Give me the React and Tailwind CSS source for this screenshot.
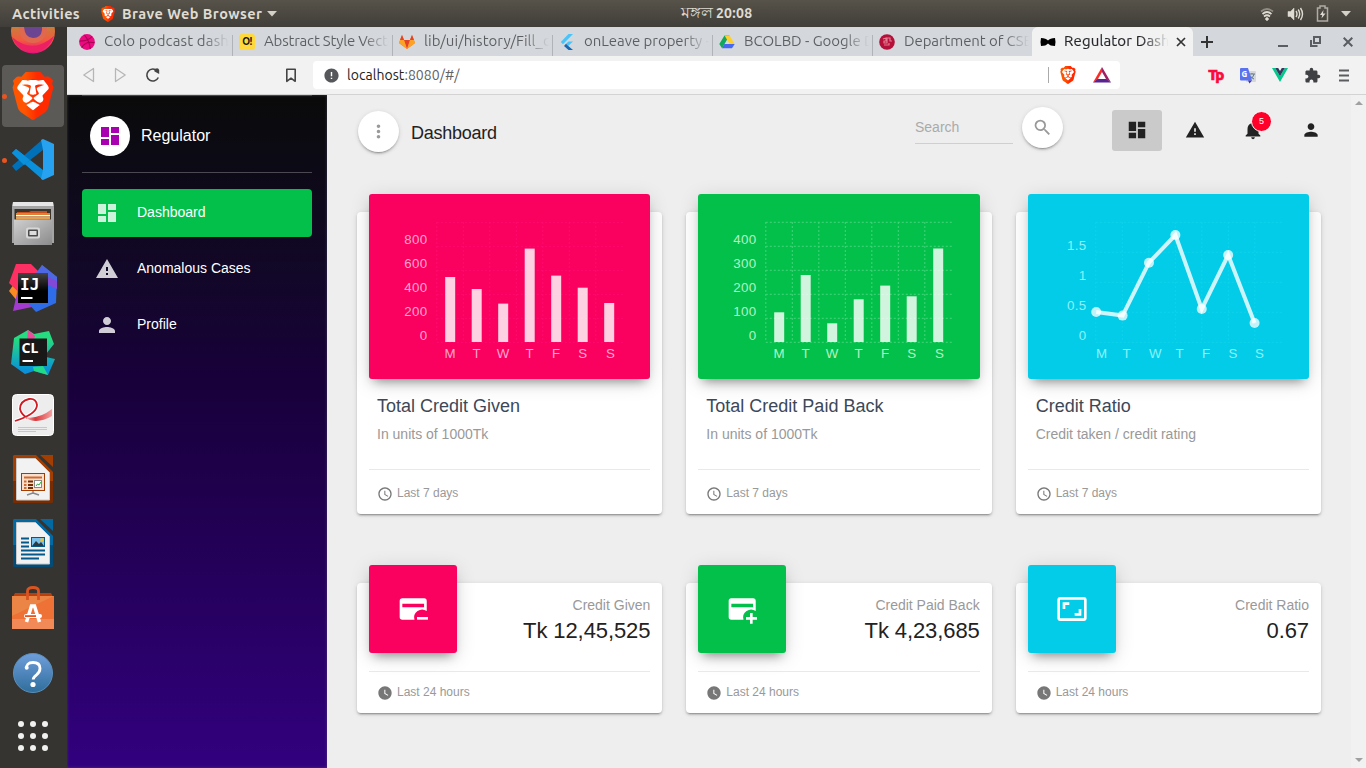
import React from 'react';
import { MdDashboard, MdWarning, MdPerson, MdNotifications, MdSearch, MdMoreVert, MdAccessTime, MdWatchLater, MdAspectRatio, MdExtension, MdError } from 'react-icons/md';
import { SiBrave } from 'react-icons/si';

const UI = "font-['Ubuntu','Noto_Sans',sans-serif]";

function Brave({ size }) {
  return (
    <svg width={size} height={size} viewBox="0 0 24 24" className="shrink-0">
      <defs>
        <linearGradient id="brave" x1="0" x2="1" y1="0" y2="0">
          <stop offset="0.3" stopColor="#ff5500" />
          <stop offset="0.6" stopColor="#ff2a00" />
        </linearGradient>
      </defs>
      <path d="M5 4h14l1.500 4-3 11-5.500 3.500L6.500 19l-3-11z" fill="#fff" />
      <SiBrave size={24} fill="url(#brave)" color="url(#brave)" />
    </svg>
  );
}

function Caret() {
  return <svg width="10" height="6" viewBox="0 0 10 6" className="shrink-0"><path d="M0 0h10L5 5.500z" fill="#d5d1c8" /></svg>;
}

function TopBar() {
  return (
    <header className={`grid h-[27px] shrink-0 grid-cols-3 items-center bg-linear-to-b from-[#57534a] to-[#403e39] text-[14.500px] font-bold text-[#dfdbd2] ${UI}`}>
      <div className="flex items-center pl-3 pt-px">
        <span className="w-[88px] tracking-[0.35px]">Activities</span>
        <Brave size={16} />
        <span className="ml-[6px] w-[145px] whitespace-nowrap tracking-[0.45px]">Brave Web Browser</span>
        <Caret />
      </div>
      <div className="pb-[3px] pl-[67px] text-center text-[14px] leading-5">
        <span className="text-[16px] font-normal leading-5">মঙ্গল</span> <span className="tracking-[0.3px]">20:08</span>
      </div>
      <div className="flex items-center justify-end gap-[12px] pr-[15px]">
        <svg width="16" height="16" viewBox="0 0 16 16" fill="none" stroke="#dfdbd2" strokeWidth="1.700">
          <path d="M2 5.500Q8 .5 14 5.500" opacity=".45" /><path d="M3.500 8Q8 4 12.500 8M5 10.500Q8 8 11 10.500" /><circle cx="8" cy="13" r="1.300" fill="#dfdbd2" strokeWidth="1" />
        </svg>
        <svg width="17" height="16" viewBox="0 0 17 16" fill="none" stroke="#dfdbd2" strokeWidth="1.400">
          <path d="M1 5.500h2.500L7 2v12l-3.500-3.500H1z" fill="#dfdbd2" strokeWidth=".5" /><path d="M9 5q2 3 0 6M11.200 3.500q3 4.500 0 9M13.500 2q4 6 0 12" />
        </svg>
        <svg width="13" height="17" viewBox="0 0 13 17" fill="none" stroke="#b0aca4" strokeWidth="1.500">
          <path d="M1.500 3h2.500V1h5v2h2.500v13h-10z" /><path d="M7.500 5L4 10h2.200L5.500 13.500 9.500 8.500H7z" fill="#dfdbd2" stroke="none" />
        </svg>
        <Caret />
      </div>
    </header>
  );
}

function Firefox() {
  return (
    <svg width="46" height="46" viewBox="0 0 46 46">
      <defs>
        <linearGradient id="ff" x1="0" x2="0" y1="0" y2="1"><stop offset=".3" stopColor="#b98a3a" /><stop offset=".7" stopColor="#f4593f" /><stop offset="1" stopColor="#e5117e" /></linearGradient>
      </defs>
      <circle cx="23" cy="22.500" r="22" fill="url(#ff)" />
      <path d="M2 28Q23 46 44 27a22 22 0 01-42 1z" fill="#ee2064" />
      <circle cx="23" cy="20" r="14" fill="#e0684f" />
      <path d="M14 18q3-3 18-5v8q-1 8-9 8t-9-11z" fill="#6b4591" />
    </svg>
  );
}

function VsCode() {
  return (
    <svg width="44" height="44" viewBox="0 0 44 44">
      <path d="M1 15l4-4 27 21v10L1 15z" fill="#0b91dc" />
      <path d="M1 28l4 5L32 12V1L1 28z" fill="#0070b8" />
      <path d="M1 15l4-4 14 11-6 5z" fill="#0b91dc" />
      <path d="M32 1l11 5v31l-11 5-2-1 2-9V12l-2-10z" fill="#27a2f0" />
    </svg>
  );
}

function Files() {
  return (
    <svg width="44" height="44" viewBox="0 0 44 44">
      <defs><linearGradient id="fi" x1="0" x2="1" y1="0" y2="1"><stop offset="0" stopColor="#cfcfcf" /><stop offset="1" stopColor="#8b8b8b" /></linearGradient></defs>
      <path d="M2 0h40l1 5v36H1V5z" fill="#a4a4a4" /><path d="M2 0h40l.5 4h-41z" fill="#e6e6e6" />
      <rect x="3.500" y="7" width="36.500" height="11" fill="#38342d" />
      <path d="M6 10h12l2-1h16v3H6z" fill="#c8501c" /><rect x="5" y="11" width="34" height="2" fill="#e08030" /><rect x="5" y="13" width="34" height="1.500" fill="#fff" /><rect x="5" y="14.500" width="34" height="3" fill="#e9a04c" />
      <path d="M3 17.500h38V43H3z" fill="url(#fi)" />
      <rect x="15" y="25.500" width="14" height="11" rx="2" fill="#d7d7d7" /><rect x="17" y="27.500" width="10" height="7" rx="1" fill="#4b4b4b" /><rect x="18.500" y="29" width="7" height="4" fill="#ddd" />
    </svg>
  );
}

function IntelliJ() {
  return (
    <svg width="50" height="50" viewBox="0 0 50 50">
      <defs><linearGradient id="blk" x1="0" x2="0" y1="0" y2="1"><stop offset="0" stopColor="#444" /><stop offset=".6" stopColor="#000" /></linearGradient></defs>
      <path d="M1 28l5-7 7 3-3 15z" fill="#f98b22" /><path d="M5 48l5-22 14 18z" fill="#a33bd0" />
      <path d="M8 1h15l10 10-10 30L1 20z" fill="#fc3062" /><path d="M34 2l15 12-1 26-20 9-9-10z" fill="#2f6ce8" /><path d="M34 2l15 12v9L28 10z" fill="#4e68e4" /><path d="M40 14l9 4v8l-9-4z" fill="#8248d6" />
      <rect x="10" y="10" width="30" height="30" fill="url(#blk)" />
      <text x="12" y="26.500" fontSize="16" fontWeight="700" fill="#fff" fontFamily="DejaVu Sans Mono">IJ</text><rect x="13" y="34" width="11.500" height="2" fill="#fff" />
    </svg>
  );
}

function CLion() {
  return (
    <svg width="46" height="46" viewBox="0 0 46 46">
      <defs><linearGradient id="cl" x1="0" x2="0" y1="0" y2="1"><stop offset=".2" stopColor="#25dc80" /><stop offset=".9" stopColor="#0a91d8" /></linearGradient></defs>
      <path d="M4 9L18 1l6 4 15-3 5 13-8 10v3l9 2-7 16-14-4-9 3-14-10z" fill="url(#cl)" /><path d="M18 1l7 6-2 9-6-3z" fill="#ea4c9b" /><path d="M23 38l10-1 5 9-14-4z" fill="#22d98a" />
      <rect x="9.500" y="9.500" width="27.500" height="27.500" fill="#181818" />
      <text x="11.500" y="24" fontSize="14" fontWeight="700" fill="#fff" fontFamily="Noto Sans">CL</text><rect x="12.500" y="31" width="10.500" height="2" fill="#fff" />
    </svg>
  );
}

function Evince() {
  return (
    <svg width="42" height="42" viewBox="0 0 42 42" className="-mt-[2px]">
      <defs><linearGradient id="ev" x1="0" x2="1" y1="0" y2="0"><stop offset=".1" stopColor="#f3b4b4" /><stop offset=".4" stopColor="#d8383c" /><stop offset="1" stopColor="#f4a0a0" /></linearGradient></defs>
      <rect x=".5" y=".5" width="41" height="41" rx="4" fill="#ededed" stroke="#fff" />
      <path d="M3 27Q25 20 25 11 24 4 17 5 8 7 8 15q1 5 7 9" fill="none" stroke="#fff" strokeWidth="4" />
      <path d="M3 27Q25 20 25 11 24 4 17 5 8 7 8 15q1 5 7 9" fill="none" stroke="#cf1c22" strokeWidth="1.800" />
      <path d="M12 23q14 3 28-8v7q-12 7-22 4z" fill="url(#ev)" />
      <path d="M6 33.500h29M6 35.500h29M6 37.500h18" stroke="#c7c7c7" />
    </svg>
  );
}

function Office({ main, dark, children }) {
  return (
    <svg width="42" height="48" viewBox="0 0 42 48" className="-mt-[2px]">
      <path d="M2 0h22l17 17v29a2 2 0 01-2 2H3a2 2 0 01-2-2V1z" fill={main} />
      <path d="M1 26h40v20a2 2 0 01-2 2H3a2 2 0 01-2-2z" fill={dark} opacity=".6" />
      <path d="M4.500 3.500h19l14 14v27.500h-33z" fill="#f2f2f2" stroke="#c9c9c9" strokeWidth="1" />
      <path d="M28 0h13v12z" fill={main} />
      {children}
    </svg>
  );
}

function Impress() {
  return (
    <Office main="#a33e03" dark="#5d2200">
      <rect x="9.500" y="18.500" width="23" height="17" fill="#f8dfcf" stroke="#a33e03" /><path d="M12 22.500h18" stroke="#d36a2c" strokeWidth="2" />
      <path d="M12 26.500h2.500M12 30h2.500M12 33h2.500" stroke="#d36a2c" strokeWidth="2" /><path d="M16 26.500h5M16 30h5M16 33h5" stroke="#7a2c00" strokeWidth="2" />
      <rect x="22.500" y="25.500" width="7" height="7" fill="#fff" stroke="#888" /><path d="M24 31l1.500-2 1.500 1 2-3" fill="none" stroke="#2eaa3c" />
      <path d="M21 36v2l-6 2M21 38l6 2" fill="none" stroke="#888" strokeWidth="1.500" />
    </Office>
  );
}

function Writer() {
  return (
    <Office main="#0369a3" dark="#04395c">
      <path d="M9 19.500h8M9 23.500h8M9 27.500h8M9 31.500h24M9 35.500h24M9 39.500h18" stroke="#04588a" strokeWidth="2" />
      <rect x="19.500" y="18.500" width="13" height="9" fill="#79c0ec" stroke="#04588a" /><path d="M20 27l4-5 3 3 2-2 3 4z" fill="#2d3a40" /><circle cx="30" cy="21" r="1.800" fill="#f0c030" />
    </Office>
  );
}

function Software() {
  return (
    <svg width="42" height="44" viewBox="0 0 42 44">
      <path d="M3 7h36l2 4H1z" fill="#b8400f" /><rect y="10" width="42" height="33" fill="#ee7136" /><path d="M0 10h42L0 30z" fill="#e89a55" opacity=".5" /><rect y="33" width="42" height="10" fill="#f18a57" />
      <path d="M15.500 14V5q0-3.500 5.500-3.500T26.500 5v9" fill="none" stroke="#d95420" strokeWidth="2.800" />
      <path d="M14.500 36l5-16h3l5 16" fill="none" stroke="#fff" strokeWidth="3.500" /><rect x="12" y="28" width="18" height="4" rx="2" fill="#fff" /><rect x="13" y="29.200" width="11" height="1.800" fill="#e95420" />
    </svg>
  );
}

function Help() {
  return (
    <svg width="40" height="40" viewBox="0 0 40 40" className="mt-[2px]">
      <defs><linearGradient id="hp" x1="0" x2="0" y1="0" y2="1"><stop offset="0" stopColor="#6f9edb" /><stop offset="1" stopColor="#2f6e9c" /></linearGradient></defs>
      <circle cx="20" cy="20" r="19.500" fill="url(#hp)" stroke="#5b8fbb" />
      <path d="M13.500 16q-.5-6.500 6.500-6.500t7 6q0 3.500-3.500 6.300-3.300 2.500-3.300 4.700" fill="none" stroke="#fff" strokeWidth="2.800" />
      <circle cx="13.700" cy="14.800" r="2" fill="#fff" /><circle cx="20" cy="31.500" r="2.600" fill="#fff" />
    </svg>
  );
}

function Apps() {
  return (
    <svg width="32" height="32" viewBox="0 0 32 32" fill="#f1f1ef">
      {[4, 16, 28].map((y) => [4, 16, 28].map((x) => <circle key={`${x}-${y}`} cx={x} cy={y} r="3" />))}
    </svg>
  );
}

function Slot({ running, children }) {
  return (
    <div className="relative flex h-16 shrink-0 items-center justify-center">
      {running && <span className="absolute left-[2px] h-[5px] w-[5px] rounded-full bg-[#e95420]" />}
      {children}
    </div>
  );
}

function Dock() {
  return (
    <aside className="flex w-[67px] shrink-0 flex-col justify-end overflow-hidden bg-[#353430] pr-px">
      <Slot><Firefox /></Slot>
      <div className="relative flex h-16 shrink-0 items-center justify-center">
        <div className="flex h-[62px] w-[62px] items-center justify-center rounded bg-[#5b5a57]"><Brave size={48} /></div>
        <span className="absolute left-[2px] h-[5px] w-[5px] rounded-full bg-[#e95420]" />
      </div>
      <Slot running><VsCode /></Slot>
      <Slot><Files /></Slot>
      <Slot><IntelliJ /></Slot>
      <Slot><CLion /></Slot>
      <Slot><Evince /></Slot>
      <Slot><Impress /></Slot>
      <Slot><Writer /></Slot>
      <Slot><Software /></Slot>
      <Slot><Help /></Slot>
      <Slot><Apps /></Slot>
    </aside>
  );
}

const tabs = [
  ['Colo podcast dashboard', 'tracking-[0.15px]', (
    <svg key="d" width="16" height="16" viewBox="0 0 16 16"><circle cx="8" cy="8" r="7.900" fill="#ec0a80" /><path d="M5.500 1q5 6 5.800 14M.5 7q8 .5 12.500-4.500M2.800 13.500Q7 6.500 15.500 8.800" fill="none" stroke="#a3004f" strokeWidth="1.100" /></svg>
  )],
  ['Abstract Style Vectors', 'tracking-[-0.2px]', <span key="o" className="flex h-4 w-4 items-center justify-center rounded-[3px] bg-[#ffd83b] text-[10px] font-bold leading-4 tracking-tighter text-[#111]">O!</span>],
  ['lib/ui/history/Fill_color', 'tracking-[0.050px]', (
    <svg key="g" width="16" height="16" viewBox="0 0 16 16"><path d="M0 9l3-8 2 5h6l2-5 3 8-8 6z" fill="#fc6d26" /><path d="M5 6h6l-3 9z" fill="#e24329" /><path d="M0 9l1-3h4l3 9z" fill="#fca326" /><path d="M16 9l-1-3h-4L8 15z" fill="#fca326" /><path d="M1 6l2-5 2 5zM11 6l2-5 2 5z" fill="#e24329" /></svg>
  )],
  ['onLeave property - flutter', 'tracking-[-0.05px]', (
    <svg key="f" width="16" height="16" viewBox="0 0 16 16"><path d="M9.500 0H14L4 10.300 1.800 8z" fill="#47c5fb" /><path d="M9.500 7.500H14L9.300 12 7 9.800z" fill="#47c5fb" /><path d="M7 9.800l2.300 2.200L14 16H9.500L5 12z" fill="#1769b5" /></svg>
  )],
  ['BCOLBD - Google Drive', 'tracking-[-0.05px]', (
    <svg key="v" width="16" height="16" viewBox="0 0 16 16"><path d="M5.500 1.500h5L5.500 10 3 14.300.3 10z" fill="#11a85b" /><path d="M5.500 1.500h5L15.700 10h-5z" fill="#ffcf2e" /><path d="M5.400 10h10.300L13 14.300H3z" fill="#4667f0" /></svg>
  )],
  ['Department of CSE', 'tracking-[-0.1px]', (
    <svg key="c" width="16" height="16" viewBox="0 0 16 16"><circle cx="8" cy="8" r="7.800" fill="#b5103a" /><path d="M4 5l3-1v3H5v2h3V4h3v3h2M5 11h5v-2" fill="none" stroke="#e57a90" strokeWidth="1.200" /></svg>
  )],
];

function TabStrip() {
  return (
    <div className={`flex h-[29px] shrink-0 bg-[#d4d8dc] text-[15px] text-[#6c6e71] ${UI}`}>
      <div className="flex w-[965px]">
        {tabs.map(([label, track, icon], i) => (
          <div key={label} className={`flex h-full shrink-0 items-center ${i === 0 ? 'w-[166px] pl-3' : 'w-40 pl-[6px]'}`}>
            <span className="flex w-[25px] shrink-0">{icon}</span>
            <span className={`min-w-0 flex-1 overflow-hidden whitespace-nowrap bg-linear-to-r from-[#5d5e61] from-80% to-transparent bg-clip-text text-transparent ${track}`}>{label}</span>
            <span className={`ml-[3px] h-[21px] w-px self-end ${i < 5 ? 'bg-[#b0b4b8]' : ''}`} />
          </div>
        ))}
      </div>
      <div className="flex w-[161px] shrink-0 items-center rounded-t-md bg-[#f2f2f2] pl-2 pr-[7px]">
        <svg width="16" height="16" viewBox="0 0 16 16" className="mr-2 shrink-0"><path d="M1 4q5 0 7 2.500Q10 4 15 4l.5 4-.5 4q-5 0-7-2.500Q6 12 1 12L.5 8z" fill="#000" /></svg>
        <span className="min-w-0 flex-1 overflow-hidden whitespace-nowrap bg-linear-to-r from-[#25262a] from-75% to-transparent bg-clip-text tracking-[0.15px] text-transparent [-webkit-text-stroke:0.15px_#35363a60]">Regulator Dashboard</span>
        <svg width="10" height="10" viewBox="0 0 10 10" className="ml-2 shrink-0"><path d="M1 1l8 8M9 1L1 9" stroke="#333" strokeWidth="1.700" /></svg>
      </div>
      <div className="flex flex-1 items-center justify-between pl-2 pr-[13px]">
        <svg width="12" height="12" viewBox="0 0 12 12"><path d="M6 0v12M0 6h12" stroke="#333" strokeWidth="2" /></svg>
        <div className="flex items-center gap-[22px]">
          <svg width="10" height="10" viewBox="0 0 10 10"><path d="M0 9h10" stroke="#5a5d62" strokeWidth="2" /></svg>
          <svg width="11" height="11" viewBox="0 0 11 11" fill="none" stroke="#5a5d62" strokeWidth="2"><path d="M4 1h6v6H4zM1 4v6h6.500" /></svg>
          <svg width="10" height="10" viewBox="0 0 10 10"><path d="M.7.7l8.600 8.600M9.300.7L.7 9.300" stroke="#5a5d62" strokeWidth="2" /></svg>
        </div>
      </div>
    </div>
  );
}

function Toolbar() {
  return (
    <div className={`flex h-[39px] shrink-0 items-center border-b border-[#d3d3d3] bg-[#f2f2f2] ${UI}`}>
      <div className="flex w-[234px] items-center gap-[19px] pl-4">
        <svg width="12" height="16" viewBox="0 0 12 16"><path d="M10.500 1.500v13L.8 8z" fill="none" stroke="#b6b6b6" strokeWidth="1.300" strokeLinejoin="round" /></svg>
        <svg width="12" height="16" viewBox="0 0 12 16"><path d="M1.500 1.500v13L11.200 8z" fill="none" stroke="#b6b6b6" strokeWidth="1.300" strokeLinejoin="round" /></svg>
        <svg width="16" height="16" viewBox="0 0 16 16"><path d="M13.300 10.500a6 6 0 11-1-6.500" fill="none" stroke="#444" strokeWidth="1.600" /><path d="M9.500 4.500a2.200 2.200 0 014.700-1.500V7z" fill="#444" /></svg>
      </div>
      <svg width="12" height="15" viewBox="0 0 12 15" className="-ml-[16px] mr-[16px]"><path d="M1.800 1.300h8.400v12L6 10.200l-4.200 3.100z" fill="none" stroke="#444" strokeWidth="1.600" strokeLinejoin="round" /></svg>
      <div className="flex h-7 w-[807px] items-center rounded bg-white pl-[10px] pr-[9px]">
        <MdError size={17} color="#55575a" />
        <div className="ml-[7px] flex-1 text-[14px] tracking-[0.05px] text-[#222]">localhost<span className="text-[#606265]">:8080/#/</span></div>
        <span className="mr-[10px] h-4 w-px bg-[#aaa]" />
        <Brave size={18} />
        <svg width="18" height="16" viewBox="0 0 18 16" className="ml-[16px]"><path d="M9 0L0 15.500 5 12l4-7z" fill="#ff2a24" /><path d="M9 0l9 15.500-5-3.500-4-7z" fill="#9e1f63" /><path d="M0 15.500h18L13.500 12h-9z" fill="#5b2391" /></svg>
      </div>
      <div className="flex flex-1 items-center justify-end gap-[16px] pr-[17px]">
        <span className="mr-px text-[15px] font-extrabold leading-4 tracking-[-1.300px] text-[#fb0b3c] [-webkit-text-stroke:0.7px_#fb0b3c]">Tp</span>
        <svg width="16" height="17" viewBox="0 0 16 17"><rect x="6" y="4" width="10" height="11" rx="1" fill="#d5d7db" /><path d="M9 7h6M12 6v1M10 12q4-2 4-5M10 8.500q2 3 4 3.500" stroke="#607d8b" fill="none" /><path d="M1 1h7l4 12.500H1a1 1 0 01-1-1V2a1 1 0 011-1z" fill="#5b72ef" /><path d="M8 13.500h4L9.500 16.500z" fill="#3a33c0" /><text x="1.500" y="10" fontSize="8" fontWeight="700" fill="#fff" fontFamily="Noto Sans">G</text></svg>
        <svg width="16" height="14" viewBox="0 0 16 14"><path d="M0 0h3.200L8 8.300 12.800 0H16L8 14z" fill="#00c98b" /><path d="M3.200 0h3L8 3l1.800-3h3L8 8.300z" fill="#35395e" /></svg>
        <MdExtension size={17} color="#3f4144" />
        <svg width="10" height="13" viewBox="0 0 10 13" className="ml-[2px]"><path d="M0 1.500h10M0 6.500h10M0 11.500h10" stroke="#5a5c5f" strokeWidth="1.800" /></svg>
      </div>
    </div>
  );
}

function SideItem({ icon: Icon, label, active }) {
  return (
    <a className={`flex h-12 items-center rounded pl-[13px] text-[14px] text-white ${active ? 'bg-[#03c04a]' : ''}`}>
      <Icon size={24} className="mr-[18px] text-white/80" />
      <span className="-mt-[2px]">{label}</span>
    </a>
  );
}

function Sidebar() {
  return (
    <nav className="flex w-[260px] shrink-0 flex-col bg-linear-to-b from-[#0a0a0a] via-[#18003a] via-42% to-[#32007f] px-[15px] shadow-[inset_0_0_3px_#6a6a8880]">
      <div className="flex h-[78px] items-center border-y border-b-white/25 border-t-white/20 pl-2 pt-1">
        <div className="flex h-10 w-10 items-center justify-center rounded-full bg-white"><MdDashboard size={24} color="#a800b0" /></div>
        <span className="ml-[11px] text-[16px] text-white">Regulator</span>
      </div>
      <div className="mt-4 flex flex-col gap-2">
        <SideItem icon={MdDashboard} label="Dashboard" active />
        <SideItem icon={MdWarning} label="Anomalous Cases" />
        <SideItem icon={MdPerson} label="Profile" />
      </div>
    </nav>
  );
}

function RoundButton({ children }) {
  return <button className="flex h-[41px] w-[41px] items-center justify-center rounded-full bg-white text-[#999] shadow-[0_2px_2px_0_rgba(0,0,0,0.14),0_3px_1px_-2px_rgba(0,0,0,0.2),0_1px_5px_0_rgba(0,0,0,0.12)]">{children}</button>;
}

function Header() {
  return (
    <div className="flex h-[75px] pl-[31px] pr-[15px] text-[#222]">
      <div className="flex items-start pt-4">
        <RoundButton><MdMoreVert size={21} /></RoundButton>
        <h1 className="ml-3 mt-[10px] text-[18px] leading-6 tracking-[-0.25px]">Dashboard</h1>
      </div>
      <div className="ml-auto flex items-start pt-3">
        <div className="mr-[9px] h-[37px] w-[98px] border-b border-[#cfcfcf] pt-[10px] text-[14px] leading-5 text-[#aaa]">Search</div>
        <RoundButton><MdSearch size={21} /></RoundButton>
        <div className="ml-[49px] mt-[3px] flex gap-2">
          <span className="flex h-[41px] w-[50px] items-center justify-center rounded-[3px] bg-[#cacaca] pb-[2px]"><MdDashboard size={22} /></span>
          <span className="flex h-[41px] w-[50px] items-center justify-center pb-[2px]"><MdWarning size={20} /></span>
          <span className="relative flex h-[41px] w-[50px] items-center justify-center pb-[2px]">
            <MdNotifications size={22} />
            <span className="absolute left-[23px] top-[1px] flex h-[21px] w-[21px] items-center justify-center rounded-full border-[1.500px] border-white bg-[#ff0029] text-[9px] text-white">5</span>
          </span>
          <span className="flex h-[41px] w-[50px] items-center justify-center pb-[2px]"><MdPerson size={20} /></span>
        </div>
      </div>
    </div>
  );
}

const days = ['M', 'T', 'W', 'T', 'F', 'S', 'S'];
const X0 = 67.8;
const STEP = 26.5;
const BASE = 148;

function Chart({ labels, gap, ink, grid, bars, points }) {
  const rows = [];
  for (let y = 28; y <= BASE; y += gap) rows.push(y);
  return (
    <svg width="281" height="185" className="block">
      <g stroke={grid} strokeDasharray="2 2">
        {rows.map((y) => <path key={y} d={`M${X0} ${y + 0.3}H254`} />)}
        {days.map((_, i) => <path key={i} d={`M${X0 + i * STEP} 28V${BASE}`} />)}
      </g>
      <g fill={ink} fontSize="13.300" letterSpacing="0.35" fontFamily="Liberation Sans">
        {labels.map((t, i) => <text key={t} x="58.500" y={146 - i * gap} textAnchor="end">{t}</text>)}
        {days.map((t, i) => (bars
          ? <text key={i} x={X0 + 13.500 + i * STEP + (i === 6 ? 1.3 : 0)} y="164" textAnchor="middle">{t}</text>
          : <text key={i} x={X0 + 0.3 + i * STEP} y="164">{t}</text>))}
      </g>
      {bars && bars.map((top, i) => <rect key={i} x={X0 + 8.400 + i * STEP} y={top} width="10" height={BASE - top} fill="#fff" fillOpacity=".82" />)}
      {points && (
        <g>
          <polyline points={points.map((y, i) => `${X0 + 0.4 + i * STEP * 0.996},${y}`).join(' ')} fill="none" stroke="#fff" strokeOpacity=".8" strokeWidth="4" />
          {points.map((y, i) => <circle key={i} cx={X0 + 0.4 + i * STEP * 0.996} cy={y} r="5" fill="#fff" fillOpacity=".75" />)}
        </g>
      )}
    </svg>
  );
}

const CARD = 'flex flex-col rounded bg-white px-3 shadow-[0_2px_2px_0_rgba(0,0,0,0.14),0_3px_1px_-2px_rgba(0,0,0,0.2),0_1px_5px_0_rgba(0,0,0,0.12)]';
const LIFT = 'rounded-[3px] shadow-[0_4px_20px_0_rgba(0,0,0,0.14),0_7px_10px_-5px_rgba(0,0,0,0.4)]';

function Footer({ icon: Icon, nudge, children }) {
  return (
    <div className="flex items-center border-t border-[#e9e9e9] pl-2 text-[12px] leading-4 text-[#999]">
      <Icon size={16} className={`mr-1 text-[#777] ${nudge}`} />
      {children}
    </div>
  );
}

function ChartCard({ bg, title, sub, children }) {
  return (
    <section className={`${CARD} h-[302px]`}>
      <div className={`-mt-[18px] h-[185px] ${LIFT} ${bg}`}>{children}</div>
      <h2 className="mt-[15px] pl-2 text-[18px] leading-6 text-[#3c4858]">{title}</h2>
      <p className="mt-[6px] pl-2 text-[14px] leading-5 text-[#999]">{sub}</p>
      <div className="mt-[25px] grid h-[47px] shrink-0"><Footer icon={MdAccessTime} nudge="mt-px">Last 7 days</Footer></div>
    </section>
  );
}

function StatCard({ bg, icon, label, value }) {
  return (
    <section className={`${CARD} h-[130px]`}>
      <div className="flex h-[88px] justify-between">
        <div className={`-mt-[18px] flex h-[88px] w-[88px] items-center justify-center text-white ${LIFT} ${bg}`}>{icon}</div>
        <div className="pt-3 text-right">
          <p className="text-[14px] leading-5 text-[#999]">{label}</p>
          <p className="text-[22px] leading-8 tracking-[-0.1px] text-[#222]">{value}</p>
        </div>
      </div>
      <div className="grid h-10"><Footer icon={MdWatchLater} nudge="mt-[3px]">Last 24 hours</Footer></div>
    </section>
  );
}

function CreditCard({ plus }) {
  return (
    <svg width="32" height="32" viewBox="0 0 24 24" fill="currentColor">
      <path d="M20 4H4A2 2 0 0 0 2 6V18A2 2 0 0 0 4 20H13.090A6 6 0 0 1 22.300 13.500V6A2 2 0 0 0 20.300 4M20.300 10.700H4V8H20.300V10.700" />
      <path d={plus ? 'M23.200 18V20H20V23H18V20H15V18H18V15H20V18Z' : 'M23.200 18V20H15V18Z'} />
    </svg>
  );
}

export default function App() {
  return (
    <div className="flex h-[768px] w-[1366px] flex-col overflow-hidden">
      <TopBar />
      <div className="flex min-h-0 flex-1">
        <Dock />
        <div className="flex min-w-0 flex-1 flex-col">
          <TabStrip />
          <Toolbar />
          <div className="flex min-h-0 flex-1 bg-[#eee] font-['Liberation_Sans',Arial,sans-serif]">
            <Sidebar />
            <main className="min-w-0 flex-1">
              <Header />
              <div className="grid grid-cols-3 gap-x-6 gap-y-[69px] pl-[30px] pr-[30px] pt-[42px]">
                <ChartCard bg="bg-[#fa005f]" title="Total Credit Given" sub="In units of 1000Tk">
                  <Chart labels={[0, 200, 400, 600, 800]} gap={24} ink="#ffa6cd" grid="#fe0a70" bars={[83, 95, 109.6, 54.6, 81.6, 93.7, 109]} />
                </ChartCard>
                <ChartCard bg="bg-[#03c04a]" title="Total Credit Paid Back" sub="In units of 1000Tk">
                  <Chart labels={[0, 100, 200, 300, 400]} gap={24} ink="#b3f3c4" grid="#45d47a" bars={[118.3, 81, 129.3, 105.3, 91.6, 102.3, 54.5]} />
                </ChartCard>
                <ChartCard bg="bg-[#02cce8]" title="Credit Ratio" sub="Credit taken / credit rating">
                  <Chart labels={[0, 0.5, 1, 1.5]} gap={30} ink="#8cf2fa" grid="#0fd3ec" points={[118, 121.6, 68.7, 41, 115, 61, 129]} />
                </ChartCard>
                <StatCard bg="bg-[#fa005f]" icon={<CreditCard />} label="Credit Given" value="Tk 12,45,525" />
                <StatCard bg="bg-[#03c04a]" icon={<CreditCard plus />} label="Credit Paid Back" value="Tk 4,23,685" />
                <StatCard bg="bg-[#02cce8]" icon={<MdAspectRatio size={32} />} label="Credit Ratio" value="0.67" />
              </div>
            </main>
            <div className="flex w-[15px] flex-col items-center justify-between bg-[#f1f1f1] py-[6px]">
              <svg width="8" height="4" viewBox="0 0 8 4"><path d="M0 4h8L4 0z" fill="#a0a0a0" /></svg>
              <svg width="8" height="4" viewBox="0 0 8 4"><path d="M0 0h8L4 4z" fill="#a0a0a0" /></svg>
            </div>
          </div>
        </div>
      </div>
    </div>
  );
}
